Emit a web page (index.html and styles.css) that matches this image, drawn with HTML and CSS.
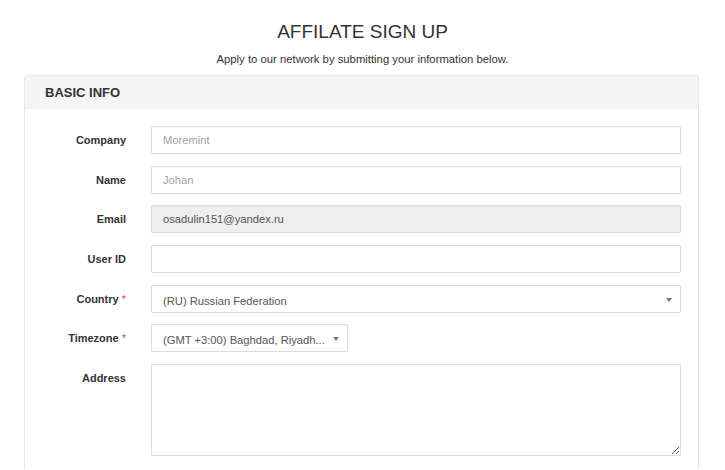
FILE: index.html
```html
<!DOCTYPE html>
<html>
<head>
<meta charset="utf-8">
<link rel="stylesheet" href="styles.css">
</head>
<body>
<div class="page">
  <h1 class="title">AFFILATE SIGN UP</h1>
  <p class="subtitle">Apply to our network by submitting your information below.</p>
  <div class="panel">
    <div class="panel-head">BASIC INFO</div>
    <form class="panel-body">
      <label class="lbl">Company</label>
      <input class="field" type="text" placeholder="Moremint">
      <label class="lbl">Name</label>
      <input class="field" type="text" placeholder="Johan">
      <label class="lbl">Email</label>
      <input class="field field-disabled" type="text" value="osadulin151@yandex.ru" readonly>
      <label class="lbl">User ID</label>
      <input class="field" type="text">
      <label class="lbl">Country <span class="req">*</span></label>
      <div class="field select">(RU) Russian Federation<span class="caret"></span></div>
      <label class="lbl">Timezone <span class="req">*</span></label>
      <div class="field select select-short">(GMT +3:00) Baghdad, Riyadh...<span class="caret"></span></div>
      <label class="lbl">Address</label>
      <textarea class="field area"></textarea>
    </form>
  </div>
</div>
</body>
</html>
```

FILE: styles.css
```css
* { box-sizing: border-box; }
html, body { margin: 0; padding: 0; background: #fff; }
body {
  font-family: "Liberation Sans", Arial, sans-serif;
  color: #333;
  width: 725px;
  height: 470px;
  overflow: hidden;
}
.page { padding-top: 21px; }
.title {
  margin: 0;
  text-align: center;
  font-size: 19px;
  font-weight: normal;
  line-height: 22px;
  color: #333;
}
.subtitle {
  margin: 9px 0 0;
  text-align: center;
  font-size: 11.3px;
  line-height: 14px;
  color: #333;
}
.panel {
  margin: 9px 0 0 24px;
  width: 675px;
  border: 1px solid #e6e6e6;
  border-bottom: none;
  border-radius: 3px 3px 0 0;
}
.panel-head {
  background: #f5f5f5;
  height: 33px;
  line-height: 33px;
  padding-left: 20px;
  font-size: 13px;
  font-weight: bold;
  color: #333;
  border-bottom: 1px solid #ececec;
}
.panel-body {
  display: grid;
  grid-template-columns: 101px 530px;
  column-gap: 25px;
  row-gap: 11.67px;
  padding: 17px 0 13px;
  margin: 0;
}
.lbl {
  text-align: right;
  font-size: 11px;
  font-weight: bold;
  line-height: 28px;
  color: #333;
}
.req { color: #e04848; font-weight: normal; }
.field {
  height: 28px;
  border: 1px solid #dcdcdc;
  border-radius: 1px;
  background: #fff;
  padding: 0 11px;
  font-family: "Liberation Sans", Arial, sans-serif;
  font-size: 11.2px;
  color: #555;
  outline: none;
  box-shadow: inset 0 1px 1px rgba(0,0,0,0.03);
  margin: 0;
}
.field::placeholder { color: #a3a3a3; }
.field-disabled { background: #eeeeee; color: #555; }
.select {
  position: relative;
  line-height: 28px;
  padding-top: 1px;
}
.select-short { width: 197px; }
.caret {
  position: absolute;
  right: 8px;
  top: 12px;
  width: 0;
  height: 0;
  border-left: 3px solid transparent;
  border-right: 3px solid transparent;
  border-top: 4px solid #777;
}
.area {
  height: 92px;
  resize: vertical;
  padding: 6px 11px;
}
```
